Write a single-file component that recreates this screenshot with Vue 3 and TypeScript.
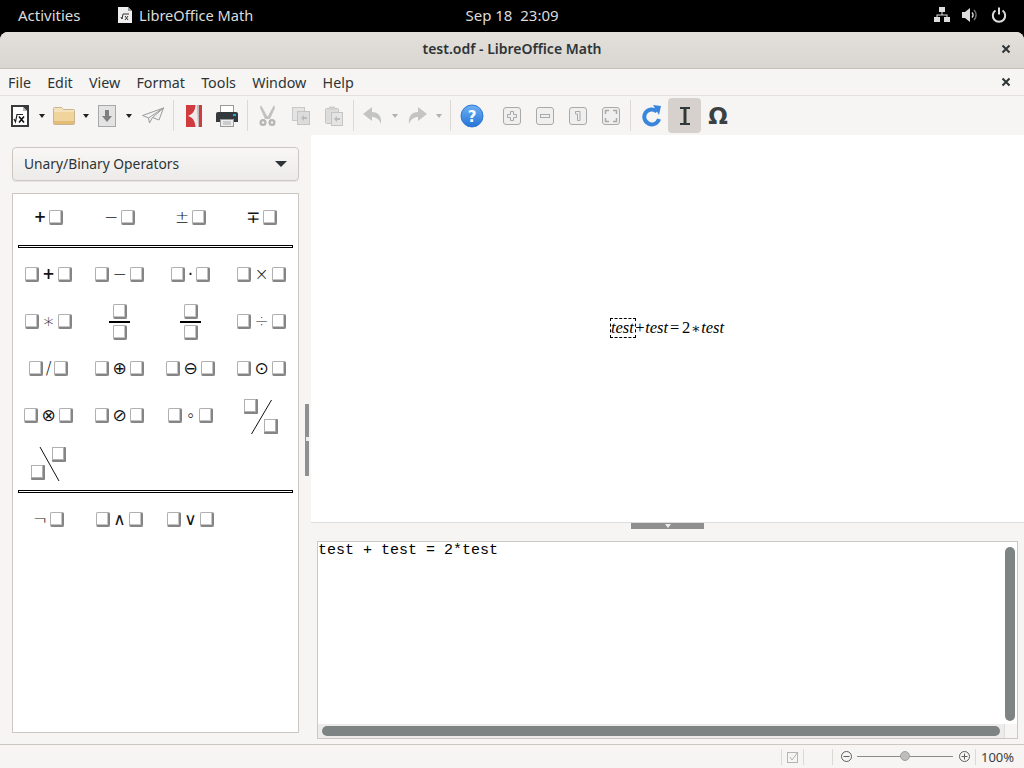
<script setup lang="ts">
interface Entry {
  op?: string;
  left?: boolean;
  kind?: "frac" | "slash" | "back" | "sep";
  weight?: "heavy" | "mid" | "star";
}

const unary = (op: string, weight?: Entry["weight"]): Entry => ({ op, weight });
const binary = (op: string, weight?: Entry["weight"]): Entry => ({ op, left: true, weight });

const entries: Entry[] = [
  unary("+", "heavy"), unary("−"), unary("±"), unary("∓", "mid"),
  { kind: "sep" },
  binary("+", "heavy"), binary("−"), binary("·", "mid"), binary("×"),
  binary("∗", "star"), { kind: "frac" }, { kind: "frac" }, binary("÷"),
  binary("/"), binary("⊕", "mid"), binary("⊖", "mid"), binary("⊙", "mid"),
  binary("⊗", "mid"), binary("⊘", "mid"), binary("∘"), { kind: "slash" },
  { kind: "back" },
  { kind: "sep" },
  unary("¬"), binary("∧", "mid"), binary("∨", "mid"),
];

const menus = ["File", "Edit", "View", "Format", "Tools", "Window", "Help"];
</script>

<template>
  <div class="screen">
    <header class="topbar">
      <span class="activities">Activities</span>
      <span class="app">
        <svg width="14" height="16" viewBox="0 0 14 16">
          <path d="M0 0h10l4 4v12H0z" fill="#eee" />
          <path d="M10 0l4 4h-4z" fill="#999" />
          <path d="M3 10l1 2 1-5h6M7 9l3 4M10 9l-3 4" fill="none" stroke="#333" stroke-width="1" />
        </svg>
        LibreOffice Math
      </span>
      <span class="clock">Sep 18&nbsp;&nbsp;23:09</span>
      <span class="tray">
        <svg width="16" height="16" viewBox="0 0 16 16" fill="#ddd">
          <rect x="5" y="0" width="6" height="5" />
          <rect x="0" y="10" width="6" height="5" />
          <rect x="10" y="10" width="6" height="5" />
          <path d="M7.500 5h1v2.500H13.500V10h-1V8.500h-9V10h-1V7.500h5z" />
        </svg>
        <svg width="16" height="16" viewBox="0 0 16 16">
          <path d="M0 5h3l5-4v14l-5-4H0z" fill="#ddd" />
          <path d="M10 5.500a3.500 3.500 0 0 1 0 5" fill="none" stroke="#ddd" stroke-width="1.400" />
          <path d="M12 3a7 7 0 0 1 0 10" fill="none" stroke="#777" stroke-width="1.400" />
        </svg>
        <svg class="power" width="16" height="16" viewBox="0 0 16 16" fill="none" stroke="#ddd" stroke-width="2">
          <path d="M4.500 3.500a6.200 6.200 0 1 0 7 0" />
          <path d="M8 0.500v7" />
        </svg>
      </span>
    </header>

    <div class="window">
      <div class="titlebar">
        <span class="title">test.odf - LibreOffice Math</span>
        <svg class="close" width="10" height="10" viewBox="0 0 10 10">
          <path d="M1.500 1.500l7 7M8.500 1.500l-7 7" stroke="#2e3436" stroke-width="2" />
        </svg>
      </div>

      <nav class="menubar">
        <span v-for="m in menus" :key="m" class="menu">{{ m }}</span>
        <svg class="close doc-close" width="10" height="10" viewBox="0 0 10 10">
          <path d="M1.500 1.500l7 7M8.500 1.500l-7 7" stroke="#2e3436" stroke-width="2" />
        </svg>
      </nav>

      <div class="toolbar">
        <span class="btn">
          <svg width="18" height="22" viewBox="0 0 18 22">
            <rect width="18" height="22" fill="#3a3a3a" />
            <path d="M2 2h10l4 4v14H2z" fill="#fff" />
            <path d="M12 2l4 4h-4z" fill="#b5b5b5" />
            <path d="M3 14l1.500 3 1.500-7.500h6" fill="none" stroke="#222" stroke-width="1.200" />
            <path d="M8 11.500l5 6M13 11.500l-5 6" stroke="#111" stroke-width="1.600" />
          </svg>
        </span>
        <span class="arr"><i class="caret" /></span>
        <span class="btn w31">
          <svg width="22" height="19" viewBox="0 0 22 19">
            <path d="M0.500 2.500a1 1 0 0 1 1-1h7l2 2h10a1 1 0 0 1 1 1v13a1 1 0 0 1-1 1h-19a1 1 0 0 1-1-1z" fill="#f4e2bd" stroke="#c9b68e" />
            <rect x="1" y="6" width="20" height="12" fill="#efd49c" />
            <rect x="1" y="15" width="20" height="3" fill="#e3bd78" />
          </svg>
        </span>
        <span class="arr w13"><i class="caret" /></span>
        <span class="btn w30">
          <svg width="18" height="22" viewBox="0 0 18 22">
            <rect x="0.500" y="0.500" width="17" height="21" fill="#e3e3e3" stroke="#a8a8a8" />
            <path d="M7 5h4v6h3l-5 6-5-6h3z" fill="#7f7f7f" />
          </svg>
        </span>
        <span class="arr w14"><i class="caret" /></span>
        <span class="btn w34">
          <svg width="22" height="18" viewBox="0 0 22 18" fill="none" stroke="#9b9b9b">
            <path d="M0.500 8.500L21.500 1 17 13 10.500 10.500 7.500 16 6.500 11z" fill="#f3f3f3" />
            <path d="M6.500 11L21.500 1 10.500 10.500" />
          </svg>
        </span>
        <span class="sep" />
        <span class="btn">
          <svg width="16" height="22" viewBox="0 0 16 22">
            <rect width="16" height="22" fill="#cf3b3f" />
            <path d="M9.500 0C9 7 6 9 2 11c4 1 7 4 7.500 11H13V0z" fill="#f3e9e9" />
            <path d="M11 0c0 9 1 15 1 22h1V0z" fill="#bbb" />
          </svg>
        </span>
        <span class="btn w34">
          <svg width="22" height="22" viewBox="0 0 22 22">
            <rect x="4.500" y="0.500" width="13" height="7" fill="#fff" stroke="#999" />
            <path d="M2 7h18a2 2 0 0 1 2 2v8H0V9a2 2 0 0 1 2-2z" fill="#33393d" />
            <rect x="17" y="9" width="3" height="2" fill="#2aa5e0" />
            <rect x="4.500" y="14.500" width="13" height="7" fill="#eee" stroke="#999" />
            <path d="M7 17h8M7 19h8" stroke="#aaa" />
          </svg>
        </span>
        <span class="sep" />
        <span class="btn">
          <svg width="17" height="22" viewBox="0 0 17 22">
            <path d="M2 0l6 11h1l6-11 1 3-5 11H6L1 3z" fill="#c2c2c2" />
            <circle cx="4" cy="17.500" r="3.500" fill="#b4b4b4" />
            <circle cx="13" cy="17.500" r="3.500" fill="#b4b4b4" />
            <circle cx="4" cy="17.500" r="1.300" fill="#f0f0f0" />
            <circle cx="13" cy="17.500" r="1.300" fill="#f0f0f0" />
          </svg>
        </span>
        <span class="btn">
          <svg width="18" height="18" viewBox="0 0 18 18">
            <rect x="0.500" y="0.500" width="12" height="13" fill="#e4e4e4" stroke="#c8c8c8" />
            <rect x="5.500" y="4.500" width="12" height="13" fill="#dcdcdc" stroke="#c4c4c4" />
            <path d="M9 11l3-3v2h3v2h-3v2z" fill="#bbb" />
          </svg>
        </span>
        <span class="btn">
          <svg width="18" height="20" viewBox="0 0 18 20">
            <rect x="0.500" y="2.500" width="13" height="15" rx="1" fill="#dcdcdc" stroke="#c4c4c4" />
            <rect x="4" y="0.500" width="6" height="3" fill="#cfcfcf" />
            <rect x="6.500" y="6.500" width="11" height="13" fill="#e4e4e4" stroke="#c4c4c4" />
            <path d="M9 13l3-3v2h3v2h-3v2z" fill="#bbb" />
          </svg>
        </span>
        <span class="sep" />
        <span class="btn w32">
          <svg width="20" height="17" viewBox="0 0 20 17">
            <path d="M9 0L0 7l9 7v-4c4 0 7 2 9 7 1-8-3-12-9-12z" fill="#c4c4c4" />
          </svg>
        </span>
        <span class="arr"><i class="caret dim" /></span>
        <span class="btn w32">
          <svg width="20" height="17" viewBox="0 0 20 17">
            <path d="M11 0l9 7-9 7v-4c-4 0-7 2-9 7-1-8 3-12 9-12z" fill="#c4c4c4" />
          </svg>
        </span>
        <span class="arr"><i class="caret dim" /></span>
        <span class="sep narrow" />
        <span class="btn">
          <svg width="24" height="24" viewBox="0 0 24 24">
            <defs>
              <linearGradient id="helpFill" x1="0" y1="0" x2="0" y2="1">
                <stop offset="0" stop-color="#6fb1f2" />
                <stop offset="1" stop-color="#2673d8" />
              </linearGradient>
            </defs>
            <circle cx="12" cy="12" r="11" fill="url(#helpFill)" stroke="#2f78cf" />
            <text x="12" y="17.500" class="help-mark">?</text>
          </svg>
        </span>
        <span class="btn zoom-btn">
          <svg width="18" height="18" viewBox="0 0 18 18" fill="none" stroke="#a9a9a9">
            <rect x="0.500" y="0.500" width="17" height="17" rx="2.500" fill="#efefef" />
            <path d="M7.500 4.500h3v3h3v3h-3v3h-3v-3h-3v-3h3z" />
          </svg>
        </span>
        <span class="btn">
          <svg width="18" height="18" viewBox="0 0 18 18" fill="none" stroke="#a9a9a9">
            <rect x="0.500" y="0.500" width="17" height="17" rx="2.500" fill="#efefef" />
            <rect x="4.500" y="7.500" width="9" height="3" />
          </svg>
        </span>
        <span class="btn">
          <svg width="18" height="18" viewBox="0 0 18 18" fill="none" stroke="#a9a9a9">
            <rect x="0.500" y="0.500" width="17" height="17" rx="2.500" fill="#efefef" />
            <path d="M6.500 4.500h4.500v9h-2.500v-6.500h-2z" />
          </svg>
        </span>
        <span class="btn">
          <svg width="18" height="18" viewBox="0 0 18 18" fill="none" stroke="#a9a9a9">
            <rect x="0.500" y="0.500" width="17" height="17" rx="2.500" fill="#efefef" />
            <path d="M3.500 7V3.500H7M11 3.500h3.500V7M14.500 11v3.500H11M7 14.500H3.500V11" stroke-width="1.500" />
          </svg>
        </span>
        <span class="sep wide" />
        <span class="btn">
          <svg width="20" height="22" viewBox="0 0 20 22">
            <path d="M15 6.500A7.500 7.500 0 1 0 17 14" fill="none" stroke="#3a86dd" stroke-width="4" />
            <path d="M11 0l8 1-2 9z" fill="#3a86dd" />
          </svg>
        </span>
        <span class="btn active">
          <svg width="12" height="20" viewBox="0 0 12 20">
            <path d="M1 1h10v2H7.500v14H11v2H1v-2h3.500V3H1z" fill="#33393b" />
          </svg>
        </span>
        <span class="btn omega">Ω</span>
      </div>

      <main class="body">
        <aside class="side">
          <div class="combo">
            <span>Unary/Binary Operators</span>
            <i class="combo-caret" />
          </div>
          <div class="palette">
            <template v-for="(e, i) in entries" :key="i">
              <div v-if="e.kind === 'sep'" class="rule" />
              <div v-else-if="e.kind === 'frac'" class="cell stack">
                <i class="ph" />
                <i class="bar" />
                <i class="ph" />
              </div>
              <div v-else-if="e.kind === 'slash'" class="cell">
                <svg width="35" height="36" viewBox="0 0 35 36">
                  <path d="M27.500 2L7.500 36" stroke="#111" />
                  <rect x="0" y="1" width="14" height="15" rx="1" class="ph-back" />
                  <rect x="0.500" y="1.500" width="11" height="12" class="ph-svg" />
                  <rect x="20" y="21" width="14" height="15" rx="1" class="ph-back" />
                  <rect x="20.500" y="21.500" width="11" height="12" class="ph-svg" />
                </svg>
              </div>
              <div v-else-if="e.kind === 'back'" class="cell">
                <svg width="36" height="36" viewBox="0 0 36 36">
                  <path d="M9 2l19 34" stroke="#111" />
                  <rect x="21" y="2" width="14" height="15" rx="1" class="ph-back" />
                  <rect x="21.500" y="2.500" width="11" height="12" class="ph-svg" />
                  <rect x="0" y="20" width="14" height="15" rx="1" class="ph-back" />
                  <rect x="0.500" y="20.500" width="11" height="12" class="ph-svg" />
                </svg>
              </div>
              <div v-else class="cell">
                <i v-if="e.left" class="ph" />
                <span class="op" :class="e.weight">{{ e.op }}</span>
                <i class="ph" />
              </div>
            </template>
          </div>
          <span class="sash"><i /></span>
        </aside>

        <section class="work">
          <div class="doc">
            <div class="formula">
              <span class="cursor">test</span><span class="sym">+</span>test<span class="sym eq">=</span><span class="sym">2</span><span class="sym times">∗</span>test
            </div>
          </div>
          <div class="split"><span class="grip"><i /></span></div>
          <div class="editor">
            <div class="edit-main">
              <pre class="code">test + test = 2*test</pre>
              <div class="vbar"><i /></div>
            </div>
            <div class="hbar"><div class="hslot"><i /></div><span class="corner" /></div>
          </div>
        </section>
      </main>

      <footer class="status">
        <span class="st-sep" />
        <span class="st-doc">
          <svg width="12" height="12" viewBox="0 0 12 12" fill="none" stroke="#b4b4b4">
            <rect x="0.500" y="1.500" width="10" height="10" />
            <path d="M3 6l2 3 6-8" />
          </svg>
        </span>
        <span class="st-sep" />
        <span class="st-gap" />
        <span class="st-sep" />
        <svg class="zm" width="11" height="11" viewBox="0 0 11 11" fill="none" stroke="#5e5e5e">
          <circle cx="5.500" cy="5.500" r="5" />
          <path d="M2.500 5.500h6" />
        </svg>
        <span class="slider"><i /></span>
        <svg class="zm" width="11" height="11" viewBox="0 0 11 11" fill="none" stroke="#5e5e5e">
          <circle cx="5.500" cy="5.500" r="5" />
          <path d="M2.500 5.500h6M5.500 2.500v6" />
        </svg>
        <span class="st-sep last" />
        <span class="pct">100%</span>
      </footer>
    </div>
  </div>
</template>

<style>
html,
body {
  margin: 0;
  background: #000;
}
</style>

<style scoped>
.screen {
  width: 1024px;
  height: 768px;
  display: flex;
  flex-direction: column;
  overflow: hidden;
  background: #000;
  font-family: "Noto Sans", sans-serif;
  font-size: 14px;
  color: #2e3436;
}

.topbar {
  height: 32px;
  flex: none;
  position: relative;
  display: flex;
  align-items: center;
  padding: 0 0 2px 18px;
  box-sizing: border-box;
  color: #dcdcdc;
  font-size: 14.600px;
}

.activities {
  width: 100px;
  font-size: 15px;
}

.app {
  display: flex;
  align-items: center;
  gap: 7px;
}

.clock {
  position: absolute;
  left: 0;
  right: 0;
  top: 5px;
  text-align: center;
  font-size: 15px;
  pointer-events: none;
}

.tray {
  margin-left: auto;
  display: flex;
  gap: 12px;
  padding-right: 17px;
  align-items: center;
}

.power {
  margin-left: 1px;
}

.window {
  flex: 1;
  min-height: 0;
  display: flex;
  flex-direction: column;
  background: #f6f5f4;
  border-radius: 8px 8px 0 0;
  overflow: hidden;
}

.titlebar {
  height: 37px;
  flex: none;
  box-sizing: border-box;
  padding-bottom: 3px;
  display: flex;
  align-items: center;
  justify-content: center;
  position: relative;
  background: linear-gradient(#e3e0dc, #d9d6d1);
  border-bottom: 1px solid #c6c0b9;
}

.title {
  font-weight: 600;
  font-size: 14px;
}

.close {
  position: absolute;
  right: 13px;
  top: 12px;
}

.menubar {
  height: 27px;
  flex: none;
  box-sizing: border-box;
  display: flex;
  align-items: center;
  position: relative;
  border-bottom: 1px solid #e3e0dd;
  font-size: 14.300px;
}

.menu {
  padding: 0 8.100px;
}

.doc-close {
  top: 8px;
}

.toolbar {
  height: 39px;
  flex: none;
  display: flex;
  align-items: center;
  padding-left: 3px;
}

.btn {
  width: 33px;
  height: 35px;
  flex: none;
  display: flex;
  align-items: center;
  justify-content: center;
  box-sizing: border-box;
}

.w30 { width: 30px; }
.w31 { width: 31px; }
.w32 { width: 32px; }
.w34 { width: 34px; }

.zoom-btn {
  margin-left: 7px;
}

.active {
  background: #d6d1cc;
  border-radius: 4px;
}

.omega {
  padding-left: 1px;
  font-family: "DejaVu Sans", sans-serif;
  font-weight: 700;
  font-size: 23px;
  color: #3b4042;
}

.help-mark {
  font-family: "DejaVu Sans", sans-serif;
  font-weight: 700;
  font-size: 15px;
  fill: #fff;
  text-anchor: middle;
}

.arr {
  width: 12px;
  flex: none;
  display: flex;
  justify-content: center;
}

.w13 { width: 13px; }
.w14 { width: 14px; }

.caret {
  width: 0;
  height: 0;
  border: 3.500px solid transparent;
  border-top: 4px solid #222;
  border-bottom: 0;
}

.caret.dim {
  border-top-color: #b0b0b0;
}

.sep {
  width: 1px;
  height: 31px;
  flex: none;
  margin: 0 3px;
  background: #dcd9d5;
}

.sep.narrow {
  margin: 0 4px 0 5px;
}

.sep.wide {
  margin-right: 4px;
}

.body {
  flex: 1;
  min-height: 0;
  display: flex;
}

.side {
  width: 311px;
  flex: none;
  position: relative;
  box-sizing: border-box;
  padding: 12px 12px 11px;
  display: flex;
  flex-direction: column;
  gap: 12px;
}

.combo {
  width: 287px;
  height: 34px;
  flex: none;
  box-sizing: border-box;
  display: flex;
  align-items: center;
  justify-content: space-between;
  padding: 0 11px 2px 11px;
  border: 1px solid #cdc7c2;
  border-radius: 4px;
  background: linear-gradient(#f8f7f6, #edebe9);
  box-shadow: 0 1px 1px rgba(0, 0, 0, 0.07);
  font-size: 13.800px;
}

.combo-caret {
  width: 0;
  height: 0;
  margin-top: 2px;
  border: 6px solid transparent;
  border-top: 6px solid #2e3436;
  border-bottom: 0;
}

.palette {
  flex: 1;
  width: 287px;
  box-sizing: border-box;
  border: 1px solid #cdc7c2;
  background: #fff;
  display: grid;
  grid-template-columns: repeat(4, 71px);
  grid-auto-rows: min-content;
  align-content: start;
}

.cell {
  height: 47px;
  display: flex;
  align-items: center;
  justify-content: center;
  gap: 3px;
  color: #111;
}

.stack {
  flex-direction: column;
  gap: 2px;
}

.bar {
  width: 21px;
  height: 2px;
  background: #000;
}

.ph {
  width: 14px;
  height: 15px;
  flex: none;
  box-sizing: border-box;
  background: #fff;
  border: 1px solid #b0b0b0;
  border-right: 2px solid #858585;
  border-bottom: 2px solid #858585;
  border-radius: 2px;
  box-shadow: inset -1px -1px 0 #c4c4c4;
}

.ph-svg {
  fill: #fff;
  stroke: #b0b0b0;
}

.ph-back {
  fill: #858585;
}

.op {
  font-family: "DejaVu Sans", sans-serif;
  font-weight: 200;
  font-size: 17px;
  line-height: 17px;
  text-align: center;
  opacity: 0.99;
}

.op.mid {
  font-weight: 400;
}

.op.heavy {
  font-weight: 700;
  font-size: 15px;
}

.op.star {
  font-size: 20px;
}

.rule {
  grid-column: 1 / -1;
  height: 3px;
  margin: 4px 4px 3px 5px;
  border: 1px solid #000;
  box-sizing: border-box;
}

.sash {
  position: absolute;
  left: 305px;
  top: 269px;
  width: 4px;
  height: 72px;
  background: #8f8f8f;
}

.sash i {
  position: absolute;
  left: 1px;
  top: 33px;
  width: 3px;
  height: 4px;
  background: #eee;
}

.work {
  flex: 1;
  min-width: 0;
  display: flex;
  flex-direction: column;
}

.doc {
  height: 387px;
  flex: none;
  box-sizing: border-box;
  padding-bottom: 2px;
  background: #fff;
  display: flex;
  align-items: center;
  justify-content: center;
}

.formula {
  font-family: "Liberation Serif", serif;
  font-style: italic;
  font-size: 16.500px;
  line-height: 18px;
  color: #000;
  white-space: nowrap;
}

.cursor {
  display: inline-block;
  outline: 1px dashed #000;
  padding-right: 1px;
}

.sym {
  font-style: normal;
  margin: 0 0.500px;
}

.eq {
  margin: 0 2px;
}

.times {
  font-family: "DejaVu Serif", serif;
  font-size: 14px;
}

.split {
  height: 19px;
  flex: none;
  box-sizing: border-box;
  border-top: 1px solid #ddd;
  display: flex;
  justify-content: center;
  position: relative;
}

.grip {
  height: 6px;
  width: 73px;
  background: #8f8f8f;
  display: flex;
  justify-content: center;
}

.grip i {
  width: 0;
  height: 0;
  margin-top: 1px;
  border: 3.500px solid transparent;
  border-top: 4px solid #eee;
  border-bottom: 0;
}

.editor {
  width: 701px;
  height: 198px;
  margin-left: 6px;
  box-sizing: border-box;
  border: 1px solid #cdc7c2;
  display: flex;
  flex-direction: column;
  background: #fff;
}

.edit-main {
  flex: 1;
  min-height: 0;
  display: flex;
}

.code {
  flex: 1;
  margin: 0;
  font-family: "Liberation Mono", monospace;
  font-size: 15px;
  line-height: 17px;
  color: #000;
}

.vbar {
  width: 12px;
  flex: none;
  margin-right: 1px;
  padding: 5px 1px;
  box-sizing: border-box;
  background: #fff;
}

.vbar i {
  display: block;
  height: 174px;
  width: 10px;
  border-radius: 5px;
  background: #7e8383;
}

.hbar {
  height: 14px;
  flex: none;
  display: flex;
  background: #eeeceb;
}

.hslot {
  flex: 1;
  padding: 2px 4px;
  box-sizing: border-box;
}

.hslot i {
  display: block;
  width: 678px;
  height: 10px;
  border-radius: 5px;
  background: #7e8383;
}

.corner {
  width: 14px;
  background: #f6f5f4;
  border-left: 1px solid #ddd;
}

.status {
  height: 24px;
  flex: none;
  box-sizing: border-box;
  border-top: 1px solid #cdc7c2;
  display: flex;
  align-items: center;
  padding-left: 781px;
  font-size: 13px;
  color: #3d3d3d;
}

.st-sep {
  width: 1px;
  height: 16px;
  background: #dcd9d5;
  flex: none;
}

.st-doc {
  width: 21px;
  display: flex;
  justify-content: center;
}

.st-gap {
  width: 28px;
}

.zm {
  margin-left: 8px;
  flex: none;
}

.slider {
  width: 96px;
  height: 1px;
  margin-left: 5px;
  margin-right: -2px;
  background: #8a8a8a;
  position: relative;
  flex: none;
}

.slider i {
  position: absolute;
  left: 43px;
  top: -5px;
  width: 10px;
  height: 10px;
  border-radius: 50%;
  background: #bdbdbd;
  border: 1px solid #a0a0a0;
  box-sizing: border-box;
}

.last {
  margin-left: 5px;
}

.pct {
  margin-left: 5px;
}
</style>
